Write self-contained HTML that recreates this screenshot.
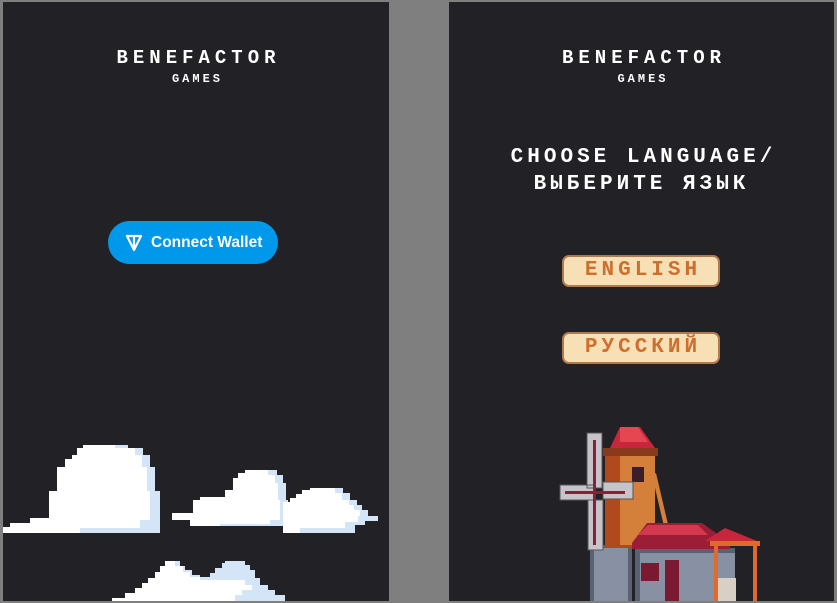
<!DOCTYPE html>
<html><head><meta charset="utf-8"><style>
*{margin:0;padding:0}
body{width:837px;height:603px;background:#7f7f7f;position:relative;overflow:hidden;font-family:"Liberation Mono","DejaVu Sans Mono",monospace}
.p{position:absolute;top:2px;height:599px;background:#222126;overflow:hidden}
.t{position:absolute;left:0;width:100%;text-align:center;color:#fff;font-weight:bold;white-space:nowrap}
.b1{top:45px;font-size:19px;letter-spacing:5px;text-indent:5px}
.b2{top:70px;font-size:12px;letter-spacing:3px;text-indent:3px}
.cw{position:absolute;left:105px;top:219px;width:170px;height:43px;border-radius:22px;background:#0098ea;color:#fff;font-family:"Liberation Sans",sans-serif;font-weight:bold;font-size:15.5px;line-height:43px}
.lb{position:absolute;left:113px;width:158px;height:32px;background:#f7e0b6;border:2px solid #b07a4c;border-radius:7px;box-sizing:border-box;color:#cd6f2e;font-weight:bold;font-size:21px;letter-spacing:4px;text-indent:4px;text-align:center;line-height:28px}
</style></head><body>
<div class="p" style="left:3px;width:386px">
<div class="t b1">BENEFACTOR</div>
<div class="t b2">GAMES</div>
<div class="cw"><svg style="position:absolute;left:17px;top:13px" width="18" height="18" viewBox="0 0 18 18"><path d="M2 2h14L9 16z M9 2v14" fill="none" stroke="#fff" stroke-width="2.2" stroke-linejoin="round"/></svg><span style="position:absolute;left:43px">Connect Wallet</span></div>
</div>
<svg style="position:absolute;left:0;top:0" width="389" height="601" viewBox="0 0 389 601">
<path fill="#d3e5f6" d="M83 445H128V448H143V455H150V467H155V491H160V533H3V527H10V523H30V518H49V491H57V467H65V459H72V455H77V448H83Z"/>
<path fill="#fff" d="M83 445H115V448H135V455H142V467H147V491H150V520H140V528H80V533H3V527H10V523H30V518H49V491H57V467H65V459H72V455H77V448H83Z"/>
<path fill="#d3e5f6" d="M245 470H277V475H283V483H286V500H288V526H190V520H172V513H193V500H200V497H225V490H233V478H238V473H245Z"/>
<path fill="#fff" d="M245 470H268V475H275V483H278V500H280V520H270V524H220V526H190V520H172V513H193V500H200V497H225V490H233V478H238V473H245Z"/>
<path fill="#d3e5f6" d="M310 488H343V493H350V500H357V505H362V510H368V516H378V521H365V525H355V533H283V502H290V498H296V494H302V490H310Z"/>
<path fill="#fff" d="M310 488H335V493H342V500H349V505H354V510H360V516H358V522H345V528H300V533H283V502H290V498H296V494H302V490H310Z"/>
<path fill="#d3e5f6" d="M112 601V598H125V593H135V588H142V583H148V578H155V572H160V566H165V561H180V566H185V570H192V575H200V577H210V573H215V568H222V563H225V561H245V565H250V570H255V578H260V585H268V590H275V595H285V601Z"/>
<path fill="#fff" d="M112 601V598H125V593H135V588H142V583H148V578H155V572H160V566H165V561H175V566H183V572H190V577H200V580H245V585H252V590H242V595H235V601Z"/>
</svg>
<div class="p" style="left:449px;width:385px">
<div class="t b1">BENEFACTOR</div>
<div class="t b2">GAMES</div>
<div class="t" style="top:142px;font-size:21px;letter-spacing:4px;text-indent:4px;line-height:27px">CHOOSE LANGUAGE/<br>ВЫБЕРИТЕ ЯЗЫК</div>
<div class="lb" style="top:253px">ENGLISH</div>
<div class="lb" style="top:330px">РУССКИЙ</div>
<svg style="position:absolute;left:91px;top:408px" width="240" height="191" viewBox="540 410 240 191">
<path fill="#5a6272" d="M590 545h42v56h-42z"/>
<path fill="#8891a3" d="M594 548h34v53h-34z"/>
<path fill="#b04a1c" d="M605 453h50v95h-50z"/>
<path fill="#d4803a" d="M620 455h35v90h-35z"/>
<path fill="#8a3a1c" d="M603 448h55v8h-55z"/>
<path fill="#c8263a" d="M610 448l10-21h20l15 21z"/>
<path fill="#e64652" d="M620 427h18l10 15h-28z"/>
<path fill="#3a1e2a" d="M632 467h12v15h-12z"/>
<path fill="#d4803a" d="M652 475l4-2 14 60-4 2z"/>
<path fill="#5a6272" d="M635 548h100v53H635z"/>
<path fill="#8891a3" d="M640 553h95v48h-95z"/>
<path fill="#9b1e36" d="M632 543l15-20h55l28 20v6h-98z"/>
<path fill="#d4384e" d="M648 525h50l10 10h-70z"/>
<path fill="#e06a2c" d="M710 541h50v5h-50zM714 546h4v55h-4zM753 546h4v55h-4z"/>
<path fill="#c8263a" d="M705 541l20-13 32 13z"/>
<path fill="#7a1a30" d="M665 560h14v41h-14z"/>
<path fill="#7a1a30" d="M641 563h18v18h-18z"/>
<path fill="#d8d0c4" d="M718 578h18v23h-18z"/>
<path fill="#c7c3cb" stroke="#555" stroke-width="1" d="M587 433h15v55h-15zM560 485h35v15h-35zM603 482h30v17h-30zM588 500h15v50h-15z"/>
<path fill="#8a2036" d="M593 440h3v105h-3zM565 491h60v3h-60z"/>
</svg>
</div>
</body></html>
